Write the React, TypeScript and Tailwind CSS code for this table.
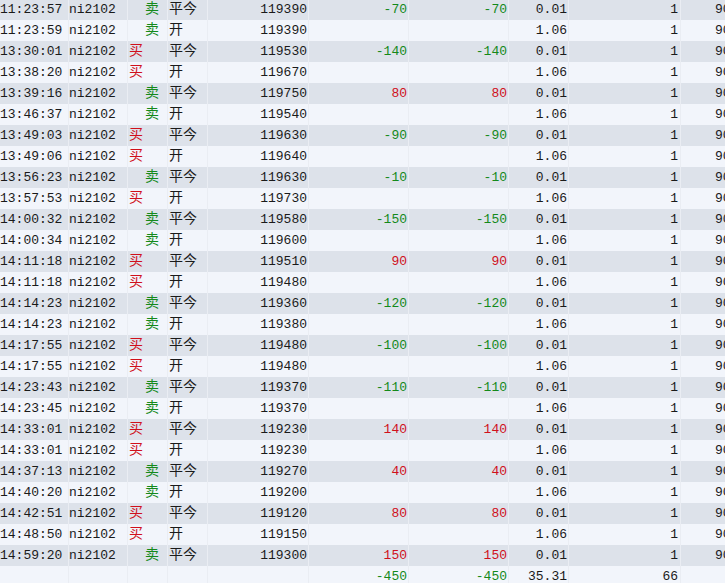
import React from "react";

type Row = [string, "买" | "卖", string, string, string, string, string];

const rows: Row[] = [
  ["11:23:57", "卖", "平今", "119390", "-70", "-70", "0.01"],
  ["11:23:59", "卖", "开", "119390", "", "", "1.06"],
  ["13:30:01", "买", "平今", "119530", "-140", "-140", "0.01"],
  ["13:38:20", "买", "开", "119670", "", "", "1.06"],
  ["13:39:16", "卖", "平今", "119750", "80", "80", "0.01"],
  ["13:46:37", "卖", "开", "119540", "", "", "1.06"],
  ["13:49:03", "买", "平今", "119630", "-90", "-90", "0.01"],
  ["13:49:06", "买", "开", "119640", "", "", "1.06"],
  ["13:56:23", "卖", "平今", "119630", "-10", "-10", "0.01"],
  ["13:57:53", "买", "开", "119730", "", "", "1.06"],
  ["14:00:32", "卖", "平今", "119580", "-150", "-150", "0.01"],
  ["14:00:34", "卖", "开", "119600", "", "", "1.06"],
  ["14:11:18", "买", "平今", "119510", "90", "90", "0.01"],
  ["14:11:18", "买", "开", "119480", "", "", "1.06"],
  ["14:14:23", "卖", "平今", "119360", "-120", "-120", "0.01"],
  ["14:14:23", "卖", "开", "119380", "", "", "1.06"],
  ["14:17:55", "买", "平今", "119480", "-100", "-100", "0.01"],
  ["14:17:55", "买", "开", "119480", "", "", "1.06"],
  ["14:23:43", "卖", "平今", "119370", "-110", "-110", "0.01"],
  ["14:23:45", "卖", "开", "119370", "", "", "1.06"],
  ["14:33:01", "买", "平今", "119230", "140", "140", "0.01"],
  ["14:33:01", "买", "开", "119230", "", "", "1.06"],
  ["14:37:13", "卖", "平今", "119270", "40", "40", "0.01"],
  ["14:40:20", "卖", "开", "119200", "", "", "1.06"],
  ["14:42:51", "买", "平今", "119120", "80", "80", "0.01"],
  ["14:48:50", "买", "开", "119150", "", "", "1.06"],
  ["14:59:20", "卖", "平今", "119300", "150", "150", "0.01"],
];

const numColor = (v: string) =>
  v.startsWith("-") ? "text-[#14891a]" : "text-[#d0101c]";

const cell = "h-[21px] leading-[21px] border-r border-[#eaedf3] whitespace-nowrap overflow-hidden";

function GridRow({ children, gray }: { children: React.ReactNode; gray: boolean }) {
  return (
    <div
      className={`grid grid-cols-[69px_59px_40px_40px_101px_100px_100px_60px_112px_1fr] ${
        gray ? "bg-[#dde2ea]" : "bg-[#f2f5fb]"
      }`}
    >
      {children}
    </div>
  );
}

export default function App() {
  return (
    <div
      className="w-[725px] h-[583px] overflow-hidden bg-[#f2f5fb] text-[13px] text-[#1a1a1a]"
      style={{ fontFamily: '"Liberation Mono", "Noto Sans CJK SC", monospace' }}
    >
      <div className="mt-[-1px]">
        {rows.map((r, i) => (
          <GridRow key={i} gray={i % 2 === 0}>
            <div className={`${cell}`}>{r[0]}</div>
            <div className={`${cell}`}>ni2102</div>
            <div className={`${cell} pl-[1px] text-[14px]`}>
              {r[1] === "买" ? (
                <span className="text-[#d0101c]">买</span>
              ) : (
                <span className="text-[#14891a] pl-[16px]">卖</span>
              )}
            </div>
            <div className={`${cell} pl-[1px] text-[14px]`}>{r[2]}</div>
            <div className={`${cell} text-right pr-[1px]`}>{r[3]}</div>
            <div className={`${cell} text-right pr-[1px] ${numColor(r[4])}`}>{r[4]}</div>
            <div className={`${cell} text-right pr-[1px] ${numColor(r[5])}`}>{r[5]}</div>
            <div className={`${cell} text-right pr-[1px]`}>{r[6]}</div>
            <div className={`${cell} text-right pr-[2px]`}>1</div>
            <div className="h-[21px] leading-[21px] pl-[34px] whitespace-nowrap overflow-hidden">90</div>
          </GridRow>
        ))}
        <GridRow gray={false}>
          <div className={cell}></div>
          <div className={cell}></div>
          <div className={cell}></div>
          <div className={cell}></div>
          <div className={cell}></div>
          <div className={`${cell} text-right pr-[1px] text-[#14891a]`}>-450</div>
          <div className={`${cell} text-right pr-[1px] text-[#14891a]`}>-450</div>
          <div className={`${cell} text-right pr-[1px]`}>35.31</div>
          <div className={`${cell} text-right pr-[2px]`}>66</div>
          <div className="h-[21px]"></div>
        </GridRow>
      </div>
    </div>
  );
}
